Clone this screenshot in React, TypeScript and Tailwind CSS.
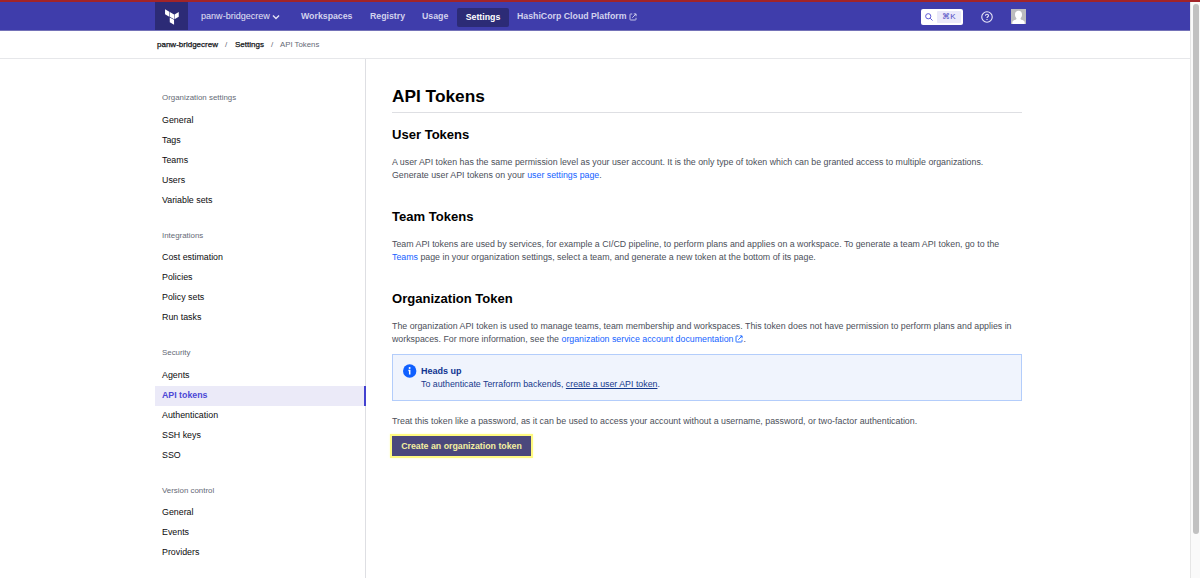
import React from "react";

type Group = { label: string; items: string[] };

const groups: Group[] = [
  { label: "Organization settings", items: ["General", "Tags", "Teams", "Users", "Variable sets"] },
  { label: "Integrations", items: ["Cost estimation", "Policies", "Policy sets", "Run tasks"] },
  { label: "Security", items: ["Agents", "API tokens", "Authentication", "SSH keys", "SSO"] },
  { label: "Version control", items: ["General", "Events", "Providers"] },
];

function ExternalIcon({ className }: { className: string }) {
  return (
    <svg viewBox="0 0 16 16" className={className} fill="none" stroke="currentColor" strokeWidth="1.8">
      <path d="M6.500 2H3.200C2.500 2 2 2.500 2 3.200v9.600c0 .7.5 1.200 1.200 1.200h9.600c.7 0 1.200-.5 1.200-1.200V9.500M9.500 1.800h4.700v4.700M14 2L6.500 9.500" />
    </svg>
  );
}

function TerraformLogo() {
  return (
    <svg viewBox="0 0 64 66" className="h-[16px] w-[16px]" fill="#fff">
      <path d="M22.8 12.1l17.6 10.2v20.3L22.8 32.4z" />
      <path d="M42.3 22.3v20.3l17.6-10.2V12.1z" />
      <path d="M3.3 1v20.3l17.6 10.2V11.2z" />
      <path d="M22.8 54.9l17.6 10.2V44.8L22.8 34.6z" />
    </svg>
  );
}

function Header() {
  return (
    <header className="flex h-[29px] w-[1190px] border-b border-[#7472b8] bg-[#3f3dab] text-[8.780px] font-bold text-[#d3d2ee]">
      <div className="ml-[155px] flex h-[28px] w-[33px] items-center justify-center bg-[#2c2b76] pt-px">
        <TerraformLogo />
      </div>
      <div className="flex h-[28px] items-center pt-[2px]">
        <button className="ml-[13px] flex w-[100px] items-center text-[9.050px] font-normal text-[#e4e3f5]">
          panw-bridgecrew
          <svg viewBox="0 0 10 10" className="ml-[2px] h-[8px] w-[8px]" fill="none" stroke="currentColor" strokeWidth="1.700">
            <path d="M1.200 3.200L5 7l3.800-3.800" />
          </svg>
        </button>
        <a className="w-[69px]">Workspaces</a>
        <a className="w-[52px]">Registry</a>
        <a className="w-[35px]">Usage</a>
        <a className="flex h-[19px] w-[52px] items-center justify-center rounded-[2px] bg-[#2c2b76] pt-px text-white">Settings</a>
        <a className="ml-[8px] flex items-center whitespace-nowrap">
          HashiCorp Cloud Platform
          <ExternalIcon className="ml-[2px] h-[8px] w-[8px]" />
        </a>
      </div>
      <div className="ml-auto mr-[164px] flex h-[29px] items-center">
        <div className="flex h-[16px] w-[42px] items-center rounded-[2px] bg-white pl-[4px] text-[#4f4cc4]">
          <svg viewBox="0 0 16 16" className="h-[8px] w-[8px]" fill="none" stroke="#5c59d6" strokeWidth="2">
            <circle cx="6.500" cy="6.500" r="5.200" />
            <path d="M10.400 10.400L15 15" />
          </svg>
          <span className="ml-[4px] flex h-[12px] w-[24px] items-center justify-center rounded-[1px] bg-[#eae9fa] text-[8px] font-normal">
            ⌘K
          </span>
        </div>
        <svg viewBox="0 0 24 24" className="ml-[18px] h-[12px] w-[12px]" fill="none" stroke="#e8e7f7" strokeWidth="2.200">
          <circle cx="12" cy="12" r="10.500" />
          <path d="M9 9.500c0-1.700 1.300-2.900 3-2.900s3 1.100 3 2.700c0 2.200-3 2.300-3 4.700M12 15.800v2.200" />
        </svg>
        <svg viewBox="0 0 15 15" className="ml-[18px] h-[15px] w-[15px]">
          <rect width="15" height="15" fill="#bcbcbe" />
          <path d="M7.500 1.800c2.200 0 3.500 1.500 3.500 3.800 0 1.700-.6 3-1.500 3.800.3 1 .9 1.300 2 1.700 1.300.5 2 1.200 2.200 2.400V15H1.300v-1.500c.2-1.200.9-1.900 2.200-2.400 1.100-.4 1.700-.7 2-1.700C4.600 8.600 4 7.300 4 5.600c0-2.300 1.300-3.800 3.500-3.800z" fill="#fff" />
        </svg>
      </div>
    </header>
  );
}

function Breadcrumb() {
  return (
    <div className="flex h-[28px] w-[1190px] items-center border-b border-[#e6e7ea] pl-[157px] text-[8px] text-[#111317]">
      <span className="w-[68px] whitespace-nowrap [-webkit-text-stroke:0.25px_#111317]">panw-bridgecrew</span>
      <span className="w-[10px] text-[#656a76]">/</span>
      <span className="w-[36px] [-webkit-text-stroke:0.25px_#111317]">Settings</span>
      <span className="w-[9px] text-[#656a76]">/</span>
      <span className="text-[7.800px] text-[#656a76]">API Tokens</span>
    </div>
  );
}

function Sidebar() {
  return (
    <nav className="ml-[155px] w-[211px] shrink-0 border-r border-[#dedfe3] pt-[32px]">
      {groups.map((g) => (
        <div key={g.label} className="mb-[18px]">
          <div className="flex h-[14px] items-center pl-[7px] text-[7.900px] text-[#656a76]">{g.label}</div>
          <div className="pt-[5.500px]">
            {g.items.map((item) =>
              item === "API tokens" ? (
                <a key={item} className="-mr-px flex h-[20px] items-center border-r-2 border-[#4341d0] bg-[#ebeaf8] pl-[7px] text-[8.800px] font-bold text-[#4b48d6]">
                  {item}
                </a>
              ) : (
                <a key={item} className="flex h-[20px] items-center pl-[7px] text-[8.850px] text-[#0c0c0e]">
                  {item}
                </a>
              )
            )}
          </div>
        </div>
      ))}
    </nav>
  );
}

function Main() {
  return (
    <main className="ml-[26px] w-[630px] whitespace-nowrap text-[8.820px] leading-[13px] text-[#4c505a]">
      <h1 className="mt-[25px] h-[29px] border-b border-[#dedfe3] text-[17.300px] font-bold leading-[24px] text-black">API Tokens</h1>
      <h2 className="mt-[13px] text-[13.050px] font-bold leading-[18px] text-black">User Tokens</h2>
      <p className="mt-[12px]">
        <span className="block">A user API token has the same permission level as your user account. It is the only type of token which can be granted access to multiple organizations.</span>
        Generate user API tokens on your <a className="text-[#1563ff]">user settings page</a>.
      </p>
      <h2 className="mt-[26px] text-[13.050px] font-bold leading-[18px] text-black">Team Tokens</h2>
      <p className="mt-[12px]">
        <span className="block">Team API tokens are used by services, for example a CI/CD pipeline, to perform plans and applies on a workspace. To generate a team API token, go to the</span>
        <a className="text-[#1563ff]">Teams</a> page in your organization settings, select a team, and generate a new token at the bottom of its page.
      </p>
      <h2 className="mt-[26px] text-[13.050px] font-bold leading-[18px] text-black">Organization Token</h2>
      <p className="mt-[12px]">
        <span className="block">The organization API token is used to manage teams, team membership and workspaces. This token does not have permission to perform plans and applies in</span>
        workspaces. For more information, see the{" "}
        <a className="text-[#1563ff]">
          organization service account documentation
          <ExternalIcon className="mb-[2px] ml-[2px] inline h-[8px] w-[8px]" />
        </a>
        .
      </p>
      <div className="mt-[8px] flex h-[47px] border border-[#b3cdfb] bg-[#f0f4fd] pl-[10px] pt-[9px] text-[#163a8c]">
        <svg viewBox="0 0 14 14" className="h-[14px] w-[14px]">
          <circle cx="6.700" cy="7" r="6.700" fill="#1060ff" />
          <circle cx="6.600" cy="4" r="1" fill="#fff" />
          <path d="M5.400 6.400h1.300v4" stroke="#fff" strokeWidth="1.500" fill="none" />
        </svg>
        <div className="ml-[4px] pt-px">
          <div className="text-[9px] font-bold text-[#0f3390]">Heads up</div>
          <div>
            To authenticate Terraform backends, <a className="underline">create a user API token</a>.
          </div>
        </div>
      </div>
      <p className="mt-[14px] text-[8.860px]">Treat this token like a password, as it can be used to access your account without a username, password, or two-factor authentication.</p>
      <button className="mt-[8px] flex h-[20px] w-[139px] items-center justify-center bg-[#4b487c] text-[8.800px] font-bold text-[#f3f0a0] shadow-[0_0_0_2px_#fffa80,0_0_2px_2px_#fffdc8]">
        Create an organization token
      </button>
    </main>
  );
}

export default function App() {
  return (
    <div className="flex h-[578px] w-[1200px] flex-col overflow-hidden bg-white font-['Liberation_Sans',Arial,sans-serif]">
      <div className="h-[2px] shrink-0 bg-[#a22428]" />
      <div className="flex h-[576px]">
        <div className="w-[1190px] shrink-0">
          <Header />
          <Breadcrumb />
          <div className="flex h-[519px]">
            <Sidebar />
            <Main />
          </div>
        </div>
        <div className="w-[10px] border-l border-[#e6e6e6] bg-[#fafafa] pl-[2px] pt-[2px]">
          <div className="h-[530px] w-[6px] rounded-full bg-[#c1c1c1]" />
        </div>
      </div>
    </div>
  );
}
